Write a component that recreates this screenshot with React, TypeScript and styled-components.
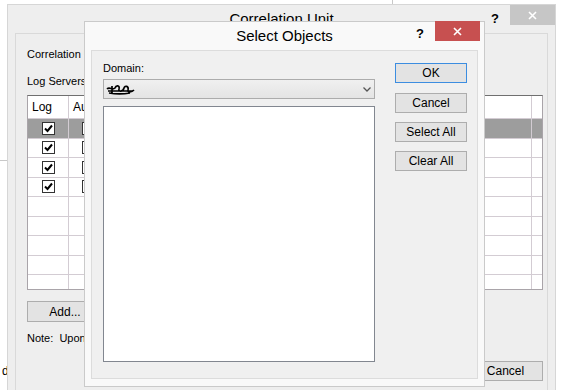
import React from 'react';
import styled, { createGlobalStyle } from 'styled-components';

// Windows-style dialog sitting over a half hidden "Correlation Unit" window

const GlobalStyle = createGlobalStyle`
  html, body { margin: 0; padding: 0; background: #fff; }
  body {
    font-family: "Liberation Sans", Arial, sans-serif;
    font-size: 11px;
    color: #000;
    overflow: hidden;
  }
`;

const Desktop = styled.div`
  position: relative;
  width: 564px;
  height: 390px;
  overflow: hidden;
  background: #fff;
`;

// windows on the desktop are the only things placed by coordinates
const BehindWindow = styled.div`
  position: absolute;
  left: -20px;
  top: -20px;
  width: 411px;
  height: 179px;
  border: 1px solid #c8c8c8;
  background: #fff;
`;

const StrayText = styled.div`
  position: absolute;
  left: 2px;
  top: 364px;
  font-size: 12px;
  line-height: 14px;
`;

const BackWindow = styled.div`
  position: absolute;
  left: 7px;
  top: 4px;
  width: 547px;
  height: 400px;
  border: 1px solid #d6d6d6;
  background: #eeeeee;
  display: flex;
  flex-direction: column;
`;

const TitleBar = styled.div<{ $h: number }>`
  height: ${p => p.$h}px;
  flex: none;
  display: grid;
  grid-template-columns: 1fr auto 1fr;
  align-items: center;
`;

const TitleText = styled.div`
  grid-column: 2;
  font-size: 15px;
  line-height: 18px;
  white-space: nowrap;
`;

const TitleControls = styled.div`
  grid-column: 3;
  justify-self: end;
  align-self: start;
  display: flex;
  align-items: flex-start;
`;

const Help = styled.div<{ $top: number }>`
  font-weight: bold;
  font-size: 13px;
  line-height: 14px;
  margin-top: ${p => p.$top}px;
  margin-right: 11px;
`;

const CloseButton = styled.div<{ $red?: boolean }>`
  width: 45px;
  height: 20px;
  background: ${p => (p.$red ? '#c75050' : '#c6c6c6')};
  display: flex;
  align-items: center;
  justify-content: center;
`;

const Frame = styled.div`
  flex: 1;
  margin: 0 7px;
  border: 1px solid #d9d9d9;
  padding: 13px 4px 0 11px;
  display: flex;
  flex-direction: column;
  align-items: flex-start;
`;

const Label = styled.div<{ $gap?: number }>`
  line-height: 14px;
  white-space: pre;
  margin-top: ${p => p.$gap ?? 0}px;
`;

const Grid = styled.div`
  margin-top: 7px;
  width: 514px;
  height: 193px;
  border: 1px solid #a9a4a9;
  border-top-color: #6f6f6f;
  background: #fff;
  overflow: hidden;
`;

const GridRow = styled.div<{ $h: number; $selected?: boolean }>`
  display: grid;
  grid-template-columns: 41px 40px 1fr 10px;
  height: ${p => p.$h}px;
  background: ${p => (p.$selected ? '#9d9d9d' : '#fff')};
  border-bottom: 1px solid #d3ccd3;
  box-sizing: border-box;
`;

const Cell = styled.div<{ $center?: boolean; $last?: boolean }>`
  display: flex;
  align-items: center;
  justify-content: ${p => (p.$center ? 'center' : 'flex-start')};
  padding-left: ${p => (p.$center ? 0 : 4)}px;
  border-right: ${p => (p.$last ? 'none' : '1px solid #d3ccd3')};
  font-size: 12px;
  overflow: hidden;
  white-space: nowrap;
`;

const Box = styled.div`
  width: 11px;
  height: 11px;
  border: 1px solid #333;
  background: #fff;
  display: flex;
  align-items: center;
  justify-content: center;
`;

const Button = styled.div<{ $w: number; $h?: number; $default?: boolean }>`
  width: ${p => p.$w}px;
  height: ${p => p.$h ?? 20}px;
  box-sizing: border-box;
  border: 1px solid ${p => (p.$default ? '#3c8de0' : '#adadad')};
  background: #e3e3e3;
  display: flex;
  align-items: center;
  justify-content: center;
  font-size: 12px;
  line-height: 14px;
`;

const Footer = styled.div`
  align-self: stretch;
  margin-top: 16px;
  display: flex;
  justify-content: flex-end;
  gap: 8px;
`;

const Dialog = styled.div`
  position: absolute;
  left: 84px;
  top: 21px;
  width: 399px;
  height: 364px;
  border: 1px solid #cacaca;
  background: #f9f9f9;
  display: flex;
  flex-direction: column;
`;

const DialogFrame = styled.div`
  flex: 1;
  margin: 0 6px 7px;
  border: 1px solid #dcdcdc;
  background: #f0f0f0;
  padding: 10px 0 0 11px;
  display: grid;
  grid-template-columns: 272px 72px;
  column-gap: 20px;
  align-items: start;
`;

const LeftColumn = styled.div`
  display: flex;
  flex-direction: column;
`;

const Combo = styled.div`
  margin-top: 4px;
  height: 20px;
  box-sizing: border-box;
  border: 1px solid #acacac;
  background: linear-gradient(#f0f0f0, #e4e4e4);
  display: flex;
  align-items: center;
  justify-content: space-between;
  padding: 0 3px 0 2px;
`;

const ListBox = styled.div`
  margin-top: 7px;
  height: 256px;
  box-sizing: border-box;
  border: 1px solid #828790;
  background: #fff;
`;

const ButtonColumn = styled.div`
  margin-top: 2px;
  display: flex;
  flex-direction: column;
  gap: 9px;
`;

const CloseX = () => (
  <svg width="9" height="9" viewBox="0 0 9 9">
    <path d="M1 1 L8 8 M8 1 L1 8" stroke="#fff" strokeWidth="1.6" />
  </svg>
);

const Check = () => (
  <svg width="9" height="9" viewBox="0 0 9 9">
    <path d="M1 4.5 L3.5 7 L8 1.5" stroke="#000" strokeWidth="2" fill="none" />
  </svg>
);

const Chevron = () => (
  <svg width="8" height="5" viewBox="0 0 8 5">
    <path d="M0.5 0.5 L4 4 L7.5 0.5" stroke="#555" strokeWidth="1.3" fill="none" />
  </svg>
);

// the redacted domain name is a black pen scribble
const Scribble = () => (
  <svg width="30" height="13" viewBox="0 0 30 13">
    <path
      d="M1 6 C4 3 6 8 9 5 C10 2 14 2 13 6 C12 9 17 9 18 5 C19 2 23 3 22 7 C21 10 26 9 28 7 M2 8 L27 8 M6 3 L6 10 M3 10 C9 11 18 11 24 10"
      stroke="#000"
      strokeWidth="1.7"
      fill="none"
    />
  </svg>
);

const rows = [true, true, true, true, null, null, null, null, null];

const App = () => {
  return (
    <Desktop>
      <GlobalStyle />
      <BehindWindow />
      <StrayText>d</StrayText>

      <BackWindow>
        <TitleBar $h={28}>
          <TitleText>Correlation Unit</TitleText>
          <TitleControls>
            <Help $top={7}>?</Help>
            <CloseButton>
              <CloseX />
            </CloseButton>
          </TitleControls>
        </TitleBar>
        <Frame>
          <Label>Correlation Unit:</Label>
          <Label $gap={13}>Log Servers</Label>
          <Grid>
            <GridRow $h={23}>
              <Cell>Log</Cell>
              <Cell>Audit</Cell>
              <Cell>Server</Cell>
              <Cell $last />
            </GridRow>
            {rows.map((checked, i) => (
              <GridRow key={i} $h={19.5} $selected={i === 0}>
                <Cell $center>
                  {checked !== null && (
                    <Box>
                      <Check />
                    </Box>
                  )}
                </Cell>
                <Cell $center>{checked !== null && <Box />}</Cell>
                <Cell />
                <Cell $last />
              </GridRow>
            ))}
          </Grid>
          <Label $gap={11} as="div">
            <Button $w={76} $h={21}>Add...</Button>
          </Label>
          <Label $gap={9}>{'Note:  Upon closing this dialog the changes will be applied.'}</Label>
          <Footer>
            <Button $w={75}>OK</Button>
            <Button $w={75}>Cancel</Button>
          </Footer>
        </Frame>
      </BackWindow>

      <Dialog>
        <TitleBar $h={28}>
          <TitleText>Select Objects</TitleText>
          <TitleControls>
            <Help $top={5}>?</Help>
            <CloseButton $red style={{ marginTop: -1, marginRight: 4 }}>
              <CloseX />
            </CloseButton>
          </TitleControls>
        </TitleBar>
        <DialogFrame>
          <LeftColumn>
            <Label>Domain:</Label>
            <Combo>
              <Scribble />
              <Chevron />
            </Combo>
            <ListBox />
          </LeftColumn>
          <ButtonColumn>
            <Button $w={72} $default style={{ marginBottom: 1 }}>OK</Button>
            <Button $w={72}>Cancel</Button>
            <Button $w={72}>Select All</Button>
            <Button $w={72}>Clear All</Button>
          </ButtonColumn>
        </DialogFrame>
      </Dialog>
    </Desktop>
  );
};

export default App;
